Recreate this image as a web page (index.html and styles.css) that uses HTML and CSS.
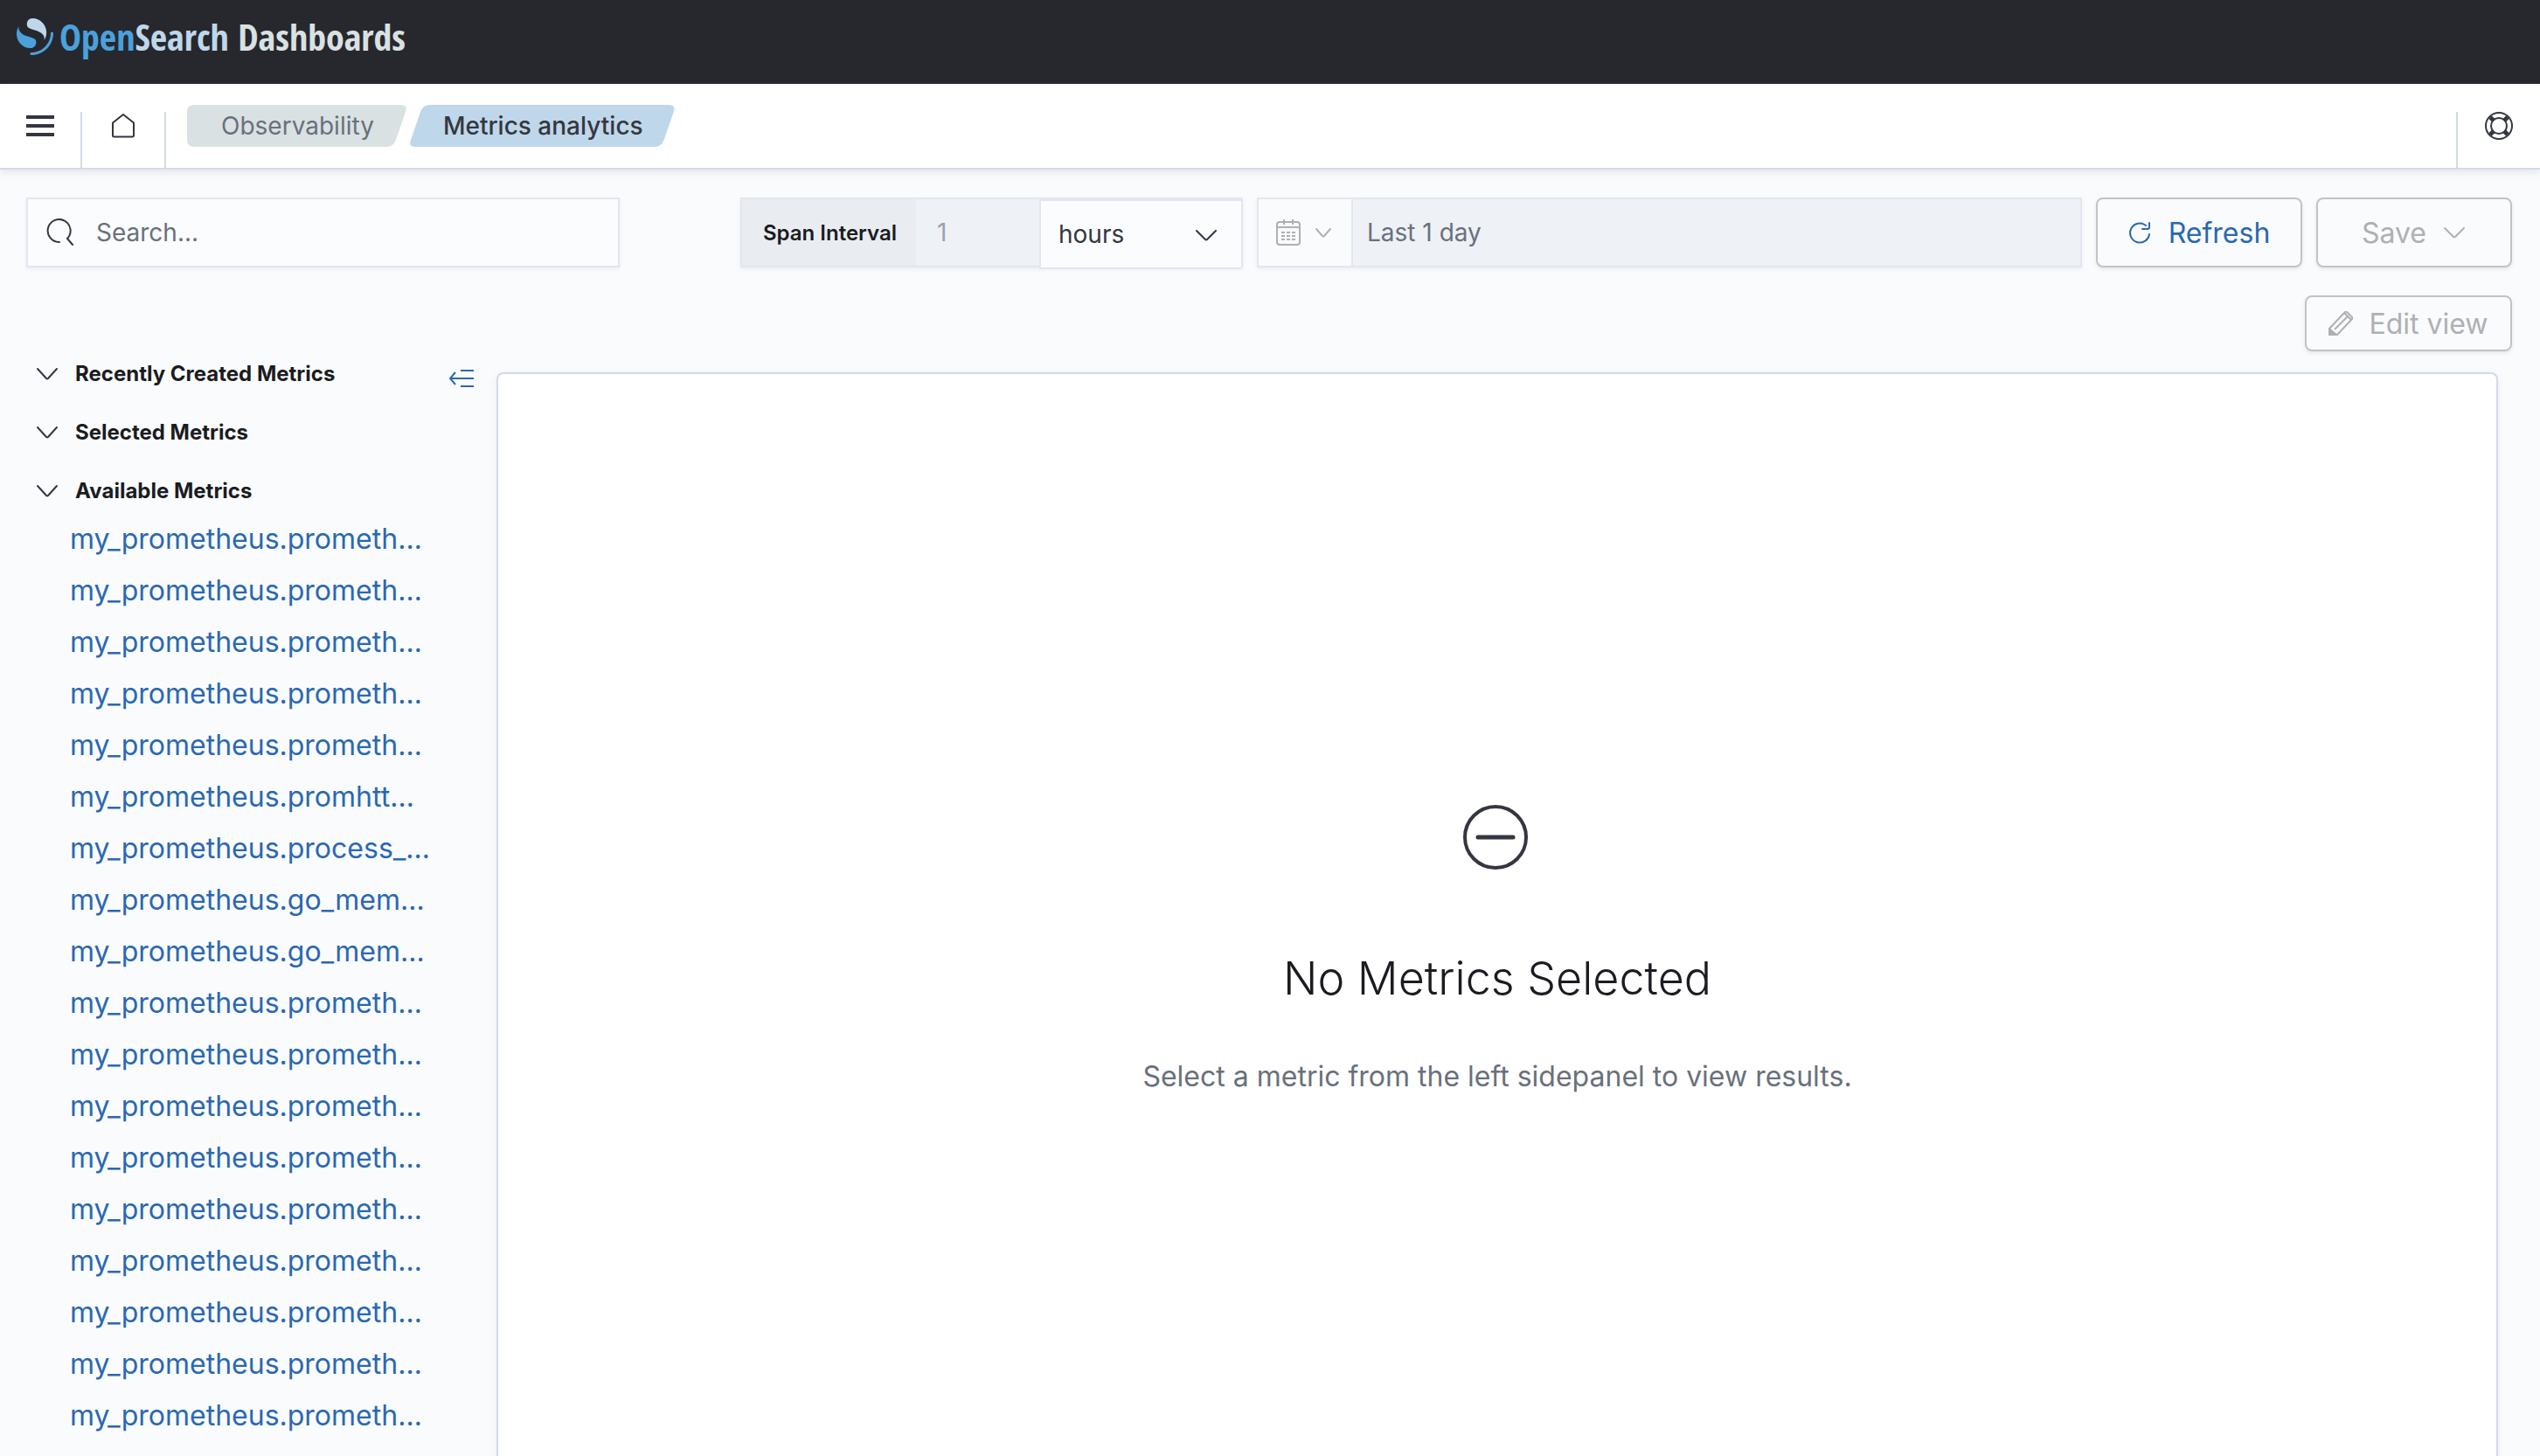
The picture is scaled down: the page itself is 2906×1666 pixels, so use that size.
FILE: index.html
```html
<!DOCTYPE html>
<html lang="en">
<head>
<meta charset="utf-8">
<title>Metrics analytics - OpenSearch Dashboards</title>
<link rel="stylesheet" href="styles.css">
</head>
<body>
<header class="brandbar">
  <a class="brand" href="#">
    <svg class="brand-mark" viewBox="0 0 64 64" aria-hidden="true">
      <path fill="#4aa1dc" d="M61.7 23.5a2.3 2.3 0 0 0-2.3 2.3c0 18.5-15 33.6-33.6 33.6a2.3 2.3 0 1 0 0 4.6C46.900 64 64 46.900 64 25.800a2.300 2.300 0 0 0-2.300-2.300Z"/>
      <path fill="#bfd7ea" d="M48.100 38c2.200-3.500 4.300-8.200 3.900-14.900C51.100 9.400 38.700-1.100 26.900.1c-4.600.4-9.400 4.200-8.900 11 .2 3 1.600 4.700 4 6 2.200 1.300 5 2.100 8.300 3 3.900 1.100 8.500 2.400 12 5 4.200 3.100 7.100 6.700 5.800 12.900Z"/>
      <path fill="#4aa1dc" d="M3.900 14C1.700 17.500-.4 22.200 0 28.900.9 42.600 13.300 53.100 25.100 51.900c4.600-.4 9.400-4.200 8.900-11-.2-3-1.600-4.700-4-6-2.200-1.300-5-2.100-8.300-3-3.900-1.100-8.500-2.400-12-5C5.500 23.800 2.600 20.200 3.900 14Z"/>
    </svg>
    <span class="brand-name"><span class="brand-open">Open</span><span class="brand-search">Search</span> Dashboards</span>
  </a>
</header>

<nav class="navbar">
  <button class="nav-button nav-menu" aria-label="Toggle navigation">
    <svg class="icon" viewBox="0 0 32 32"><path fill="currentColor" d="M0 4h32v4H0zM0 14h32v4H0zM0 24h32v4H0z"/></svg>
  </button>
  <a class="nav-button nav-home" href="#" aria-label="Home">
    <svg class="icon" viewBox="0 0 32 32"><path fill="none" stroke="currentColor" stroke-width="2" stroke-linejoin="round" d="M4 12.500 16 3l12 9.500V27a1.500 1.500 0 0 1-1.500 1.500h-21A1.500 1.500 0 0 1 4 27Z"/></svg>
  </a>
  <ol class="crumbs">
    <li class="crumb"><svg class="crumb-shape" viewBox="0 0 251 48" preserveAspectRatio="none" aria-hidden="true"><path d="M8 0h236q9 0 6 8l-11 32q-3 8-11 8H8q-8 0-8-8V8q0-8 8-8Z"/></svg><a href="#">Observability</a></li>
    <li class="crumb crumb-current"><svg class="crumb-shape" viewBox="0 0 302 48" preserveAspectRatio="none" aria-hidden="true"><path d="M22 0h273q9 0 6 8l-11 32q-3 8-11 8H6q-8 0-5-8L12 8q3-8 10-8Z"/></svg><a href="#" aria-current="page">Metrics analytics</a></li>
  </ol>
  <button class="nav-button nav-help" aria-label="Help">
    <svg class="icon" viewBox="0 0 32 32" fill="none" stroke="currentColor" stroke-width="2"><circle cx="16" cy="16" r="15"/><circle cx="16" cy="16" r="9"/><path stroke-width="5" d="m6 6 4 4M26 6l-4 4M6 26l4-4M26 26l-4-4"/></svg>
  </button>
</nav>

<main class="page">
  <div class="toolbar">
    <label class="search">
      <svg class="icon" viewBox="0 0 32 32" fill="none" stroke="currentColor" stroke-width="2" stroke-linecap="round"><path d="M16 27A13 13 0 1 1 25 23l6 7"/></svg>
      <input type="search" placeholder="Search..." aria-label="Search metrics">
    </label>
    <div class="span-group">
      <label class="span-label" for="span-value">Span Interval</label>
      <input class="span-value" id="span-value" type="text" value="1" disabled>
      <div class="span-unit">
        <select aria-label="Span unit"><option>hours</option><option>days</option></select>
        <svg class="icon-small" viewBox="0 0 24 24" fill="none" stroke="currentColor" stroke-width="2" stroke-linecap="round" stroke-linejoin="round"><path d="m1 7 10 10q1 1 2 0L23 7"/></svg>
      </div>
    </div>
    <div class="date-group">
      <button class="date-quick" disabled aria-label="Date quick select">
        <svg class="icon" viewBox="0 0 32 32" fill="none" stroke="currentColor" stroke-width="2"><rect x="3" y="4" width="26" height="26" rx="3"/><path d="M3 10h26M11 1v6M21 1v6"/><path stroke-dasharray="4 2" d="M8 16h16M8 20h16M8 24h16"/></svg>
        <svg class="icon-tiny" viewBox="0 0 20 20" fill="none" stroke="currentColor" stroke-width="2" stroke-linecap="round" stroke-linejoin="round"><path d="m2 6 7 8q1 1 2 0l7-8"/></svg>
      </button>
      <button class="date-value" disabled>Last 1 day</button>
    </div>
    <button class="button button-refresh">
      <svg class="icon-button" viewBox="0 0 28 28" fill="none" stroke="currentColor" stroke-width="2" stroke-linecap="round"><path d="M24 3v5q0 2-2 2h-6M24 16A11 11 0 1 1 20 6"/></svg>
      Refresh
    </button>
    <button class="button button-save" disabled>
      Save
      <svg class="icon-small" viewBox="0 0 24 24" fill="none" stroke="currentColor" stroke-width="2" stroke-linecap="round" stroke-linejoin="round"><path d="m1 7 10 10q1 1 2 0L23 7"/></svg>
    </button>
  </div>

  <div class="view-actions">
    <button class="button button-edit" disabled>
      <svg class="icon-button" viewBox="0 0 28 28" fill="none" stroke="currentColor" stroke-width="2" stroke-linejoin="round"><path d="M1 20 19 1q1-1 2 0l6 6q1 1 0 2L10 27H1ZM7 21 22 6M18 2l8 8"/><path fill="currentColor" d="M1 20v7h8Z"/></svg>
      Edit view
    </button>
  </div>

  <div class="workspace">
    <aside class="sidebar">
      <button class="collapse" aria-label="Collapse sidebar">
        <svg class="icon-button" viewBox="0 0 28 28" fill="none" stroke="currentColor" stroke-width="2"><path d="M13 5h15M1 14h27M13 23h15M7 7l-6 7 6 7"/></svg>
      </button>
      <button class="section"><svg class="icon-small" viewBox="0 0 24 24"><path d="m1 6 10 11q1 1 2 0L23 6"/></svg>Recently Created Metrics</button>
      <button class="section"><svg class="icon-small" viewBox="0 0 24 24"><path d="m1 6 10 11q1 1 2 0L23 6"/></svg>Selected Metrics</button>
      <button class="section"><svg class="icon-small" viewBox="0 0 24 24"><path d="m1 6 10 11q1 1 2 0L23 6"/></svg>Available Metrics</button>
      <ul class="metrics">
        <li><a href="#">my_prometheus.prometh…</a></li>
        <li><a href="#">my_prometheus.prometh…</a></li>
        <li><a href="#">my_prometheus.prometh…</a></li>
        <li><a href="#">my_prometheus.prometh…</a></li>
        <li><a href="#">my_prometheus.prometh…</a></li>
        <li><a href="#">my_prometheus.promhtt…</a></li>
        <li><a href="#">my_prometheus.process_…</a></li>
        <li><a href="#">my_prometheus.go_mem…</a></li>
        <li><a href="#">my_prometheus.go_mem…</a></li>
        <li><a href="#">my_prometheus.prometh…</a></li>
        <li><a href="#">my_prometheus.prometh…</a></li>
        <li><a href="#">my_prometheus.prometh…</a></li>
        <li><a href="#">my_prometheus.prometh…</a></li>
        <li><a href="#">my_prometheus.prometh…</a></li>
        <li><a href="#">my_prometheus.prometh…</a></li>
        <li><a href="#">my_prometheus.prometh…</a></li>
        <li><a href="#">my_prometheus.prometh…</a></li>
        <li><a href="#">my_prometheus.prometh…</a></li>
      </ul>
    </aside>
    <section class="panel">
      <svg class="empty-icon" viewBox="0 0 80 76" fill="none" stroke="currentColor" stroke-width="4" stroke-linecap="round"><circle cx="38" cy="38" r="35"/><path stroke-width="5" d="M18 38h40"/></svg>
      <h2>No Metrics Selected</h2>
      <p>Select a metric from the left sidepanel to view results.</p>
    </section>
  </div>
</main>
</body>
</html>
```
FILE: styles.css
```css
* { box-sizing: border-box; }

body {
  margin: 0;
  height: 100vh;
  display: flex;
  flex-direction: column;
  overflow: hidden;
  background: #fafbfd;
  color: #343741;
  font-family: Inter, "Liberation Sans", sans-serif;
  font-size: 28px;
}

button, input, select {
  margin: 0;
  padding: 0;
  border: 0;
  border-radius: 0;
  background: none;
  color: inherit;
  font: inherit;
}

a { color: inherit; text-decoration: none; }
svg { display: block; flex: none; }
ol, ul { margin: 0; padding: 0; list-style: none; }

.icon { width: 32px; height: 32px; }
.icon-button { width: 28px; height: 28px; }
.icon-small { width: 24px; height: 24px; }
.icon-tiny { width: 20px; height: 20px; }

/* Brand bar */
.brandbar {
  flex: none;
  height: 96px;
  padding: 12px 19px;
  background: #27282e;
}
.brand { display: inline-flex; align-items: center; gap: 7px; }
.brand-mark { width: 42px; height: 42px; }
.brand-name {
  color: #d9e1e2;
  font-family: "Open Sans Condensed", "Liberation Sans Narrow", "Open Sans", sans-serif;
  font-size: 42px;
  font-weight: 700;
  line-height: 60px;
  white-space: nowrap;
}
.brand-open { color: #4aa1dc; }
.brand-search { color: #bfd7ea; }

/* Navigation bar */
.navbar {
  flex: none;
  position: relative;
  display: flex;
  align-items: flex-start;
  height: 98px;
  background: #fff;
  border-bottom: 2px solid #d3dae6;
  box-shadow: 0 4px 8px rgba(100, 110, 140, .14);
}
.nav-button {
  display: flex;
  justify-content: center;
  height: 64px;
  margin-top: 32px;
  border-right: 2px solid #d3dae6;
}
.nav-menu { width: 94px; }
.nav-home { width: 96px; }
.nav-help { width: 96px; margin-left: auto; border-right: 0; border-left: 2px solid #d3dae6; }

.crumbs { display: flex; gap: 4px; margin: 24px 0 0 24px; }
.crumb { position: relative; padding: 0 37px 0 39px; line-height: 48px; color: #69707d; }
.crumb-shape { position: absolute; inset: 0; width: 100%; height: 100%; fill: #d9e1e2; }
.crumb a { position: relative; }
.crumb-current { padding: 0 36px 0 38px; color: #343741; font-weight: 500; }
.crumb-current .crumb-shape { fill: #bfd7ea; }

/* Toolbar */
.page { flex: 1; min-height: 0; display: flex; flex-direction: column; padding: 32px 32px 0 30px; }
.toolbar { flex: none; display: flex; gap: 16px; height: 80px; }

.search, .span-group, .date-group {
  display: flex;
  border: 2px solid #e3e6ef;
  box-shadow: 0 2px 4px rgba(100, 110, 140, .1);
}
.search {
  width: 679px;
  margin-right: 122px;
  padding: 0 20px;
  align-items: center;
  gap: 26px;
  background: #fbfcfe;
}
.search input { flex: 1; min-width: 0; height: 100%; outline: 0; }
.search input::placeholder { color: #69707d; opacity: 1; }

.span-group { width: 575px; background: #eef1f6; }
.span-label {
  width: 199px;
  padding-left: 24px;
  background: #e9edf2;
  color: #1a1c21;
  font-size: 24px;
  font-weight: 600;
  line-height: 78px;
}
.span-value { flex: 1; min-width: 0; padding-left: 24px; color: #98a2b3; }
.span-unit {
  position: relative;
  width: 231px;
  height: 80px;
  border: 2px solid #e3e6ef;
  border-right: 0;
  background: #fbfcfe;
}
.span-unit select { width: 100%; height: 100%; padding-left: 20px; appearance: none; }
.span-unit svg { position: absolute; right: 28px; top: 27px; pointer-events: none; }

.date-group { flex: 1; }
.date-quick {
  display: flex;
  align-items: center;
  gap: 14px;
  width: 108px;
  padding-left: 18px;
  border-right: 2px solid #e3e6ef;
  color: #afb0b3;
}
.date-value { flex: 1; padding-left: 16px; background: #eef1f6; color: #69707d; text-align: left; }

.button {
  display: flex;
  align-items: center;
  justify-content: center;
  gap: 18px;
  border: 2px solid #c2c3c6;
  border-radius: 8px;
  box-shadow: 0 2px 4px rgba(100, 110, 140, .14);
  font-size: 32px;
  color: #afb0b3;
}
.button-refresh { width: 236px; color: #2a68b2; }
.button-save { width: 224px; gap: 20px; padding-right: 2px; }
.view-actions { flex: none; display: flex; justify-content: flex-end; padding: 32px 0 24px; }
.button-edit { width: 237px; height: 64px; }

/* Workspace */
.workspace { flex: 1; min-height: 0; display: flex; }
.sidebar { position: relative; width: 538px; overflow: hidden; margin-top: -32px; }
.section {
  display: flex;
  align-items: center;
  gap: 20px;
  height: 67px;
  padding-left: 12px;
  color: #1a1c21;
  font-size: 24px;
  font-weight: 700;
  white-space: nowrap;
}
.section svg { fill: none; stroke: #343741; stroke-width: 2; stroke-linecap: round; stroke-linejoin: round; }
.collapse { position: absolute; right: 26px; top: 25px; color: #2a68b2; }
.metrics { padding-left: 50px; margin-top: -8px; }
.metrics li { height: 59px; line-height: 59px; font-size: 32px; color: #2a68b2; white-space: nowrap; }

.panel {
  flex: 1;
  display: flex;
  flex-direction: column;
  align-items: center;
  margin-right: 16px;
  padding-top: 492px;
  background: #fff;
  border: 2px solid #d3dae6;
  border-bottom: 0;
  border-radius: 8px 8px 0 0;
  box-shadow: 0 2px 8px rgba(100, 110, 140, .1);
  text-align: center;
}
.empty-icon { width: 80px; height: 76px; }
.panel h2 { margin: 84px 0 0; color: #1a1c21; font-size: 52px; font-weight: 300; line-height: 80px; }
.panel p { margin: 48px 0 0; color: #69707d; font-size: 32px; line-height: 48px; }
```
